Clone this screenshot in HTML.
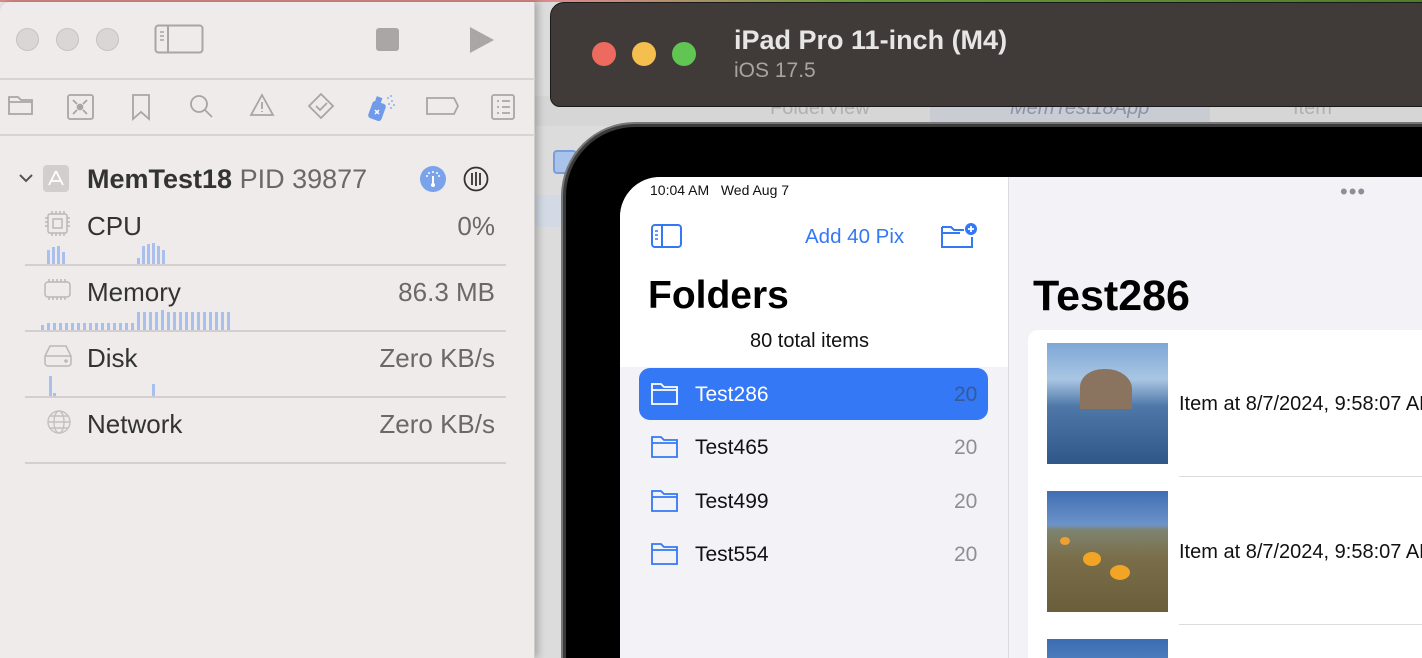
<!DOCTYPE html>
<html><head><meta charset="utf-8"><style>
*{margin:0;padding:0;box-sizing:border-box}
html,body{width:1422px;height:658px;overflow:hidden}
body{position:relative;background:#e9e6e5;font-family:"Liberation Sans",sans-serif}
.a{position:absolute}
.t{position:absolute;white-space:nowrap}
</style></head><body>
<div class="a" style="left:0;top:0;width:1422px;height:2px;background:linear-gradient(90deg,#d98a8a,#d98a8a 40%,#6a9a3a 60%,#4d7d2a)"></div>
<div class="a" style="left:535px;top:2px;width:887px;height:656px;background:#dcdcdc"></div>
<div class="a" style="left:535px;top:96px;width:887px;height:30px;background:#d6d6d6"></div>
<div class="t" style="left:770px;top:97px;font-size:20px;color:#b0b0b0">FolderView</div>
<div class="a" style="left:930px;top:96px;width:280px;height:30px;background:#c9ccd3"></div>
<div class="t" style="left:1010px;top:97px;font-size:20px;color:#8a93a8;font-style:italic">MemTest18App</div>
<div class="t" style="left:1293px;top:97px;font-size:20px;color:#b0b0b0">Item</div>
<div class="a" style="left:553px;top:150px;width:24px;height:24px;border:2px solid #7a9ed8;border-radius:4px;background:#a9c3ea"></div>
<div class="a" style="left:535px;top:195px;width:40px;height:32px;background:#d3dae6"></div>
<!-- Xcode left pane -->
<div class="a" style="left:0;top:2px;width:535px;height:656px;background:#eeebea;border-top-left-radius:10px;box-shadow:3px 0 8px rgba(0,0,0,.25);border-right:1px solid #cfcbca"></div>
<div class="a" style="left:16px;top:28px;width:23px;height:23px;border-radius:50%;background:#d9d6d5;border:1px solid #c6c2c1"></div>
<div class="a" style="left:56px;top:28px;width:23px;height:23px;border-radius:50%;background:#d9d6d5;border:1px solid #c6c2c1"></div>
<div class="a" style="left:96px;top:28px;width:23px;height:23px;border-radius:50%;background:#d9d6d5;border:1px solid #c6c2c1"></div>
<svg class="a" style="left:154px;top:24px" width="50" height="30"><rect x="1.5" y="1.5" width="47" height="27" rx="3" fill="none" stroke="#a9a5a4" stroke-width="2"/><line x1="14" y1="2" x2="14" y2="28" stroke="#a9a5a4" stroke-width="2"/><path d="M6 8h4M6 12h4M6 16h4" stroke="#a9a5a4" stroke-width="1.5"/></svg>
<div class="a" style="left:376px;top:28px;width:23px;height:23px;border-radius:3px;background:#aaa6a5"></div>
<svg class="a" style="left:468px;top:26px" width="28" height="28"><path d="M2 1L26 14L2 27Z" fill="#aaa6a5"/></svg>
<div class="a" style="left:0;top:78px;width:535px;height:2px;background:#d8d4d3"></div>
<div class="a" style="left:0;top:134px;width:535px;height:2px;background:#d8d4d3"></div>
<svg class="a" style="left:0;top:90px" width="530" height="34" fill="none" stroke="#a9a5a4" stroke-width="1.8">
<path d="M9 7h9l3 3h11v14H9z M9 12h23"/>
<rect x="68" y="5" width="25" height="24" rx="2"/><circle cx="80" cy="17" r="2.5" fill="#a9a5a4"/><path d="M73 10l4 4M87 10l-4 4M73 24l4-4M87 24l-4-4"/>
<path d="M133 5h16v24l-8-7-8 7z"/>
<circle cx="199" cy="14" r="8"/><path d="M205 20l7 7"/>
<path d="M262 5l11 20h-22z M262 12v7M262 21v1"/>
<path d="M321 4l12 12-12 12-12-12z M316 16l4 4 7-7"/>
<path d="M427 8h27l4 8-4 8h-27z"/>
<rect x="492" y="5" width="22" height="24" rx="2"/><path d="M497 11h2M502 11h8M497 17h2M502 17h8M497 23h2M502 23h8"/>
</svg>
<svg class="a" style="left:366px;top:92px" width="32" height="32"><rect x="4" y="10" width="14" height="18" rx="3" transform="rotate(20 11 19)" fill="#6f9bea"/><rect x="10" y="5" width="6" height="5" fill="#6f9bea" transform="rotate(20 13 7)"/><path d="M9 18l4 4M13 18l-4 4" stroke="#fff" stroke-width="1.5"/><g fill="#8cb0ef"><circle cx="22" cy="6" r="1"/><circle cx="25" cy="4" r="1"/><circle cx="26" cy="9" r="1"/><circle cx="23" cy="12" r="1"/><circle cx="28" cy="13" r="1"/><circle cx="25" cy="16" r="1"/></g></svg>
<svg class="a" style="left:18px;top:172px" width="16" height="12"><path d="M2 3l6 6 6-6" fill="none" stroke="#555" stroke-width="2"/></svg>
<div class="a" style="left:43px;top:165px;width:26px;height:27px;border-radius:4px;background:#d2cecd"></div>
<svg class="a" style="left:46px;top:168px" width="20" height="20" fill="none" stroke="#fff" stroke-width="1.8"><path d="M10 3L3 17M10 3l7 14M5 13h10"/></svg>
<div class="t" style="left:87px;top:164px;font-size:27px;font-weight:bold;color:#333">MemTest18 <span style="font-weight:normal;color:#6c6867">PID 39877</span></div>
<div class="a" style="left:420px;top:166px;width:26px;height:26px;border-radius:50%;background:#7aa3ec"></div>
<svg class="a" style="left:420px;top:166px" width="26" height="26"><path d="M13 10v9" stroke="#fff" stroke-width="2"/><circle cx="13" cy="19" r="2" fill="#fff"/><g fill="#fff"><circle cx="7" cy="10" r="1"/><circle cx="9" cy="7" r="1"/><circle cx="13" cy="6" r="1"/><circle cx="17" cy="7" r="1"/><circle cx="19" cy="10" r="1"/></g></svg>
<svg class="a" style="left:463px;top:166px" width="26" height="26" fill="none" stroke="#333" stroke-width="1.8"><circle cx="13" cy="13" r="11.5"/><path d="M9 7v12M13 6v14M17 7v12"/></svg>
<svg class="a" style="left:44px;top:210px" width="28" height="28" fill="none" stroke="#bbb7b6" stroke-width="1.5"><rect x="4" y="4" width="19" height="19" rx="2"/><rect x="9" y="9" width="9" height="9"/><path d="M8 1v3M12 1v3M16 1v3M20 1v3M8 23v3M12 23v3M16 23v3M20 23v3M1 8h3M1 12h3M1 16h3M23 8h3M23 12h3M23 16h3"/></svg>
<div class="t" style="left:87px;top:211px;font-size:26px;color:#333">CPU</div>
<div class="t" style="right:927px;top:211px;font-size:26px;color:#6c6867">0%</div>
<svg class="a" style="left:0;top:240px" width="260" height="25" fill="#a9c0ee"><rect x="47" y="10" width="3" height="14"/><rect x="52" y="7" width="3" height="17"/><rect x="57" y="6" width="3" height="18"/><rect x="62" y="12" width="3" height="12"/><rect x="137" y="18" width="3" height="6"/><rect x="142" y="6" width="3" height="18"/><rect x="147" y="4" width="3" height="20"/><rect x="152" y="3" width="3" height="21"/><rect x="157" y="6" width="3" height="18"/><rect x="162" y="10" width="3" height="14"/></svg>
<div class="a" style="left:25px;top:264px;width:481px;height:2px;background:#d3cfce"></div>
<svg class="a" style="left:43px;top:278px" width="30" height="24" fill="none" stroke="#bbb7b6" stroke-width="1.5"><rect x="2" y="4" width="25" height="15" rx="3"/><path d="M6 1v3M10 1v3M14 1v3M18 1v3M22 1v3M6 19v3M10 19v3M14 19v3M18 19v3M22 19v3"/></svg>
<div class="t" style="left:87px;top:277px;font-size:26px;color:#333">Memory</div>
<div class="t" style="right:927px;top:277px;font-size:26px;color:#6c6867">86.3 MB</div>
<svg class="a" style="left:0;top:308px" width="260" height="22" fill="#a9c0ee">
<rect x="41" y="17" width="3" height="5"/>
<g><rect x="47" y="15" width="3" height="7"/><rect x="53" y="15" width="3" height="7"/><rect x="59" y="15" width="3" height="7"/><rect x="65" y="15" width="3" height="7"/><rect x="71" y="15" width="3" height="7"/><rect x="77" y="15" width="3" height="7"/><rect x="83" y="15" width="3" height="7"/><rect x="89" y="15" width="3" height="7"/><rect x="95" y="15" width="3" height="7"/><rect x="101" y="15" width="3" height="7"/><rect x="107" y="15" width="3" height="7"/><rect x="113" y="15" width="3" height="7"/><rect x="119" y="15" width="3" height="7"/><rect x="125" y="15" width="3" height="7"/><rect x="131" y="15" width="3" height="7"/></g>
<g><rect x="137" y="4" width="3" height="18"/><rect x="143" y="4" width="3" height="18"/><rect x="149" y="4" width="3" height="18"/><rect x="155" y="4" width="3" height="18"/><rect x="161" y="2" width="3" height="20"/><rect x="167" y="4" width="3" height="18"/><rect x="173" y="4" width="3" height="18"/><rect x="179" y="4" width="3" height="18"/><rect x="185" y="4" width="3" height="18"/><rect x="191" y="4" width="3" height="18"/><rect x="197" y="4" width="3" height="18"/><rect x="203" y="4" width="3" height="18"/><rect x="209" y="4" width="3" height="18"/><rect x="215" y="4" width="3" height="18"/><rect x="221" y="4" width="3" height="18"/><rect x="227" y="4" width="3" height="18"/></g></svg>
<div class="a" style="left:25px;top:330px;width:481px;height:2px;background:#d3cfce"></div>
<svg class="a" style="left:43px;top:344px" width="30" height="24" fill="none" stroke="#bbb7b6" stroke-width="1.5"><path d="M2 12L7 2h16l5 10v7a3 3 0 0 1-3 3H5a3 3 0 0 1-3-3z M2 12h26"/><circle cx="23" cy="17" r="1" fill="#bbb7b6"/></svg>
<div class="t" style="left:87px;top:343px;font-size:26px;color:#333">Disk</div>
<div class="t" style="right:927px;top:343px;font-size:26px;color:#6c6867">Zero KB/s</div>
<svg class="a" style="left:0;top:374px" width="200" height="22" fill="#a9c0ee"><rect x="49" y="2" width="3" height="20"/><rect x="53" y="19" width="3" height="3"/><rect x="152" y="10" width="3" height="12"/></svg>
<div class="a" style="left:25px;top:396px;width:481px;height:2px;background:#d3cfce"></div>
<svg class="a" style="left:45px;top:408px" width="28" height="28" fill="none" stroke="#c4c0bf" stroke-width="1.4"><circle cx="14" cy="14" r="11"/><ellipse cx="14" cy="14" rx="5" ry="11"/><path d="M3 14h22M5 8h18M5 20h18"/></svg>
<div class="t" style="left:87px;top:409px;font-size:26px;color:#333">Network</div>
<div class="t" style="right:927px;top:409px;font-size:26px;color:#6c6867">Zero KB/s</div>
<div class="a" style="left:25px;top:462px;width:481px;height:2px;background:#d3cfce"></div>
<!-- simulator title bar -->
<div class="a" style="left:550px;top:2px;width:880px;height:105px;background:#403b39;border-top-left-radius:14px;border-bottom-left-radius:10px;border:1px solid #1a1a1a"></div>
<div class="a" style="left:592px;top:42px;width:24px;height:24px;border-radius:50%;background:#ed6a5e"></div>
<div class="a" style="left:632px;top:42px;width:24px;height:24px;border-radius:50%;background:#f5bf4f"></div>
<div class="a" style="left:672px;top:42px;width:24px;height:24px;border-radius:50%;background:#61c554"></div>
<div class="t" style="left:734px;top:25px;font-size:27px;font-weight:bold;color:#e8e6e5">iPad Pro 11-inch (M4)</div>
<div class="t" style="left:734px;top:59px;font-size:21px;color:#a8a4a2">iOS 17.5</div>
<!-- iPad bezel -->
<div class="a" style="left:563px;top:124px;width:900px;height:560px;background:#000;border-top-left-radius:72px;border:3px solid #3a3a3a;box-shadow:0 0 0 2px #777"></div>
<div class="a" style="left:620px;top:177px;width:810px;height:481px;background:#f2f2f7;border-top-left-radius:40px;overflow:hidden">
  <div class="a" style="left:0;top:0;width:388px;height:190px;background:#fff"></div>
  <div class="a" style="left:388px;top:0;width:1px;height:490px;background:#dcdce0"></div>
  <div class="t" style="left:30px;top:5px;font-size:14px;color:#111">10:04 AM&nbsp;&nbsp;&nbsp;Wed Aug 7</div>
  <svg class="a" style="left:30px;top:46px" width="34" height="26" fill="none" stroke="#3478f6" stroke-width="2"><rect x="2" y="2" width="29" height="22" rx="3"/><line x1="12" y1="2" x2="12" y2="24"/><path d="M5 8h3M5 12h3M5 16h3" stroke-width="1.5"/></svg>
  <div class="t" style="left:185px;top:48px;font-size:20.5px;color:#3478f6">Add 40 Pix</div>
  <svg class="a" style="left:320px;top:44px" width="38" height="30" fill="none" stroke="#3478f6" stroke-width="2"><path d="M2 6h9l3 3h10M2 6v20h30V16 M2 12h18"/><circle cx="31" cy="8" r="6" fill="#3478f6" stroke="none"/><path d="M31 5v6M28 8h6" stroke="#fff" stroke-width="1.8"/></svg>
  <div class="t" style="left:28px;top:97px;font-size:39px;font-weight:bold;color:#000">Folders</div>
  <div class="t" style="left:130px;top:153px;font-size:20px;color:#111">80 total items</div>
  <div class="a" style="left:19px;top:191px;width:349px;height:52px;background:#3478f6;border-radius:11px"></div>
  <svg class="a" style="left:31px;top:205px" width="28" height="24" fill="none" stroke="#fff" stroke-width="1.8"><path d="M1 2h9l3 3h13v17H1z M1 8h25"/></svg>
  <div class="t" style="left:75px;top:206px;font-size:21px;color:#fff">Test286</div>
  <div class="t" style="left:334px;top:206px;font-size:21px;color:#355a9a">20</div>
  <svg class="a" style="left:31px;top:258px" width="28" height="24" fill="none" stroke="#3478f6" stroke-width="1.8"><path d="M1 2h9l3 3h13v17H1z M1 8h25"/></svg>
  <div class="t" style="left:75px;top:259px;font-size:21px;color:#111">Test465</div>
  <div class="t" style="left:334px;top:259px;font-size:21px;color:#8e8e93">20</div>
  <svg class="a" style="left:31px;top:312px" width="28" height="24" fill="none" stroke="#3478f6" stroke-width="1.8"><path d="M1 2h9l3 3h13v17H1z M1 8h25"/></svg>
  <div class="t" style="left:75px;top:313px;font-size:21px;color:#111">Test499</div>
  <div class="t" style="left:334px;top:313px;font-size:21px;color:#8e8e93">20</div>
  <svg class="a" style="left:31px;top:365px" width="28" height="24" fill="none" stroke="#3478f6" stroke-width="1.8"><path d="M1 2h9l3 3h13v17H1z M1 8h25"/></svg>
  <div class="t" style="left:75px;top:366px;font-size:21px;color:#111">Test554</div>
  <div class="t" style="left:334px;top:366px;font-size:21px;color:#8e8e93">20</div>
  <div class="t" style="left:720px;top:2px;font-size:22px;color:#8e8e93;letter-spacing:1px">•••</div>
  <div class="t" style="left:413px;top:95px;font-size:43px;font-weight:bold;color:#000">Test286</div>
  <div class="a" style="left:408px;top:153px;width:420px;height:340px;background:#fff;border-radius:10px"></div>
  <div class="a" style="left:427px;top:166px;width:121px;height:121px;background:linear-gradient(180deg,#7ea7d6 0%,#a9c6e3 30%,#4f78a8 52%,#2f5788 100%)"></div>
  <div class="a" style="left:460px;top:192px;width:52px;height:40px;background:#8a7460;border-radius:45% 50% 0 0"></div>
  <div class="t" style="left:559px;top:216px;font-size:20px;color:#111">Item at 8/7/2024, 9:58:07 AM</div>
  <div class="a" style="left:559px;top:299px;width:260px;height:1px;background:#dcdce0"></div>
  <div class="a" style="left:427px;top:314px;width:121px;height:121px;background:linear-gradient(180deg,#3f6fb3 0%,#6d93c9 28%,#7d8470 32%,#7a6e4a 55%,#6b5e3a 100%)"></div>
  <div class="a" style="left:463px;top:375px;width:18px;height:14px;background:#f2a524;border-radius:50%"></div>
  <div class="a" style="left:490px;top:388px;width:20px;height:15px;background:#f2a524;border-radius:50%"></div>
  <div class="a" style="left:440px;top:360px;width:10px;height:8px;background:#eea030;border-radius:50%"></div>
  <div class="t" style="left:559px;top:364px;font-size:20px;color:#111">Item at 8/7/2024, 9:58:07 AM</div>
  <div class="a" style="left:559px;top:447px;width:260px;height:1px;background:#dcdce0"></div>
  <div class="a" style="left:427px;top:462px;width:121px;height:40px;background:linear-gradient(180deg,#3a6db2,#5f8bc6)"></div>
</div>
</body></html>
